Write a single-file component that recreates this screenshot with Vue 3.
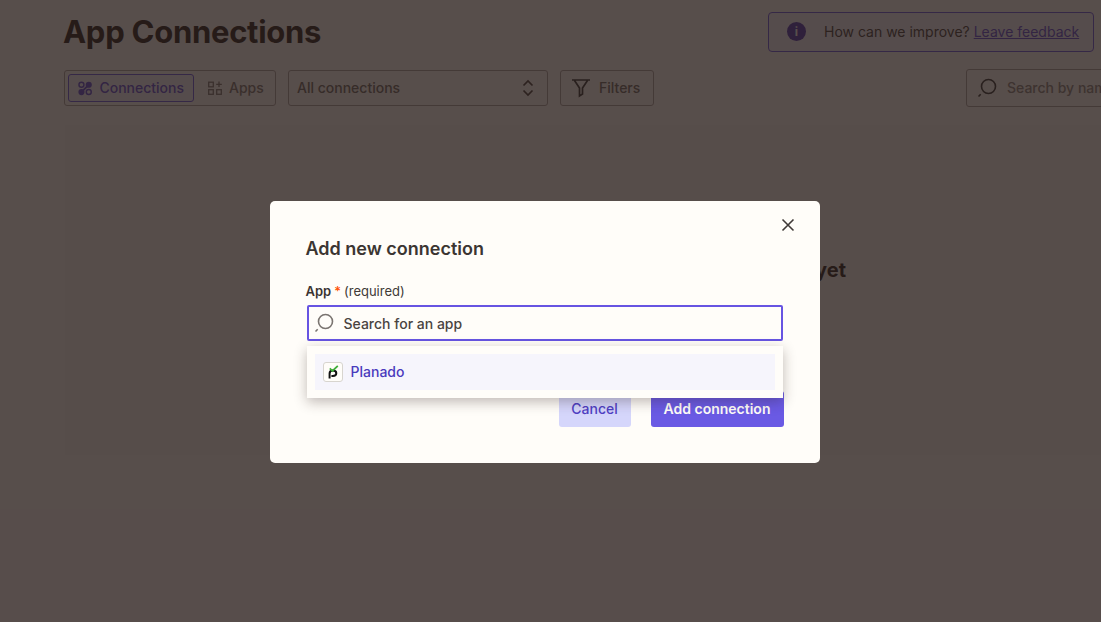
<script setup>
const tabs = [
  { id: 'connections', label: 'Connections', active: true },
  { id: 'apps', label: 'Apps', active: false }
]
</script>

<template>
  <div class="page">
    <header class="page-head">
      <h1>App Connections</h1>
      <div class="feedback">
        <span class="info-dot">i</span>
        <span class="feedback-text">How can we improve? <a href="#">Leave feedback</a></span>
      </div>
    </header>

    <div class="toolbar">
      <div class="tabs">
        <button v-for="tab in tabs" :key="tab.id" class="tab" :class="{ active: tab.active }">
          <svg v-if="tab.id === 'connections'" width="15" height="15" viewBox="0 0 15 15" fill="currentColor">
            <circle cx="3.6" cy="3.6" r="2.6" fill="none" stroke="currentColor" stroke-width="1.5" />
            <circle cx="11.2" cy="3.6" r="3.2" />
            <circle cx="3.6" cy="11.2" r="3.2" />
            <path d="M4 10.8 10.8 4" stroke="currentColor" stroke-width="2" />
            <circle cx="11.2" cy="11.2" r="2.6" fill="none" stroke="currentColor" stroke-width="1.5" />
          </svg>
          <svg v-else width="14" height="14" viewBox="0 0 14 14" fill="none" stroke="currentColor" stroke-width="1.3">
            <rect x="0.7" y="1.2" width="4.6" height="4.6" />
            <rect x="0.7" y="8.7" width="4.6" height="4.6" />
            <rect x="8.7" y="8.7" width="4.6" height="4.6" />
            <path d="M11 0.5v5.6M8.2 3.3h5.6" />
          </svg>
          {{ tab.label }}
        </button>
      </div>
      <div class="select">
        <span>All connections</span>
        <svg width="14" height="18" viewBox="0 0 14 18" fill="none" stroke="currentColor" stroke-width="1.7">
          <path d="M2.5 6.5 7 2l4.5 4.5M2.5 11.5 7 16l4.5-4.5" />
        </svg>
      </div>
      <button class="filters">
        <svg width="20" height="20" viewBox="0 0 20 20" fill="none" stroke="currentColor" stroke-width="1.7">
          <path d="M1 2h18M3.5 2.5l5 7.5v8l3-2v-6l5-7.5" />
        </svg>
        Filters
      </button>
      <div class="page-search">
        <svg class="search-icon" width="20" height="20" viewBox="0 0 20 20" fill="none" stroke="currentColor" stroke-width="1.6">
          <circle cx="11.5" cy="8.5" r="7" />
          <path d="M1.5 18.5l2.2-2.2" />
        </svg>
        <span>Search by name</span>
      </div>
    </div>

    <section class="empty">
      <h2>You don't have any connections yet</h2>
    </section>

    <div class="scrim">
      <div class="modal">
        <button class="close" aria-label="Close">
          <svg width="14" height="14" viewBox="0 0 14 14" fill="none" stroke="currentColor" stroke-width="1.6">
            <path d="M1.5 1.5l11 11M12.5 1.5l-11 11" />
          </svg>
        </button>
        <h3>Add new connection</h3>
        <label class="field-label">App<em>*</em><span>(required)</span></label>
        <div class="search-box">
          <svg class="search-icon" width="20" height="20" viewBox="0 0 20 20" fill="none" stroke="currentColor" stroke-width="1.6">
            <circle cx="11.5" cy="8.5" r="7" />
            <path d="M1.5 18.5l2.2-2.2" />
          </svg>
          <span>Search for an app</span>
        </div>
        <div class="dropdown">
          <div class="option">
            <span class="app-logo">
              <svg width="14" height="14" viewBox="0 0 14 14" fill="none">
                <path d="M3.6 13.5V8.4c0-1.8 1.4-2.9 3.3-2.9s3.4 1.1 3.4 2.7-1.5 2.7-3.4 2.7H5.4" stroke="#111" stroke-width="2" />
                <path d="M3.8 3.4l2.6 2.5 5.4-5" stroke="#3fae3a" stroke-width="1.8" />
              </svg>
            </span>
            Planado
          </div>
        </div>
        <div class="actions">
          <button class="btn-cancel">Cancel</button>
          <button class="btn-add">Add connection</button>
        </div>
      </div>
    </div>
  </div>
</template>

<style scoped>
.page { position: relative; height: 622px; overflow: hidden; background: #fffdf9; color: #2d2e2e; font-family: Inter, "Liberation Sans", sans-serif; }
.page-head { display: flex; justify-content: space-between; align-items: flex-start; padding: 12px 7px 0 63px; height: 58px; box-sizing: border-box; }
h1 { margin: 0; font-size: 31px; line-height: 40px; font-weight: 700; letter-spacing: -0.27px; color: #201714; }
.feedback { display: flex; align-items: center; width: 326px; height: 40px; box-sizing: border-box; border: 1px solid #6754e2; border-radius: 4px; background: #f6f5ff; padding: 0 0 1px 18px; font-size: 14px; white-space: nowrap; color: #3f3835; }
.info-dot { width: 19px; height: 19px; border-radius: 50%; background: #4a2fb0; color: #fffdf9; font-size: 12px; font-weight: 700; line-height: 19px; text-align: center; margin-right: 18px; flex: none; }
.feedback a { color: #5b45d6; }
.toolbar { display: flex; align-items: center; padding-left: 64px; gap: 12px; height: 36px; margin-top: 12px; white-space: nowrap; }
.tabs { display: flex; align-items: center; gap: 4px; height: 36px; width: 212px; box-sizing: border-box; border: 1px solid #a8a39e; border-radius: 3px; padding: 3px; }
.tab { display: flex; align-items: center; gap: 7px; height: 28px; padding: 0 9px 2px 9px; border: 1px solid transparent; border-radius: 3px; background: none; font: 500 14px Inter, "Liberation Sans", sans-serif; color: #7a7470; }
.tab svg { margin-top: 2px; }
.tab.active { width: 126px; border-color: #6754e2; background: #f6f5ff; color: #5b45d6; }
.select { display: flex; align-items: center; justify-content: space-between; width: 260px; height: 36px; box-sizing: border-box; padding: 0 12px 2px 8px; border: 1px solid #a8a39e; border-radius: 3px; font-size: 14px; font-weight: 500; color: #6b6560; }
.select svg { color: #3f3835; margin-top: 2px; }
.filters { display: flex; align-items: center; gap: 8px; width: 94px; height: 36px; box-sizing: border-box; padding: 0 0 2px 10px; border: 1px solid #a8a39e; border-radius: 3px; background: none; font: 500 14px Inter, "Liberation Sans", sans-serif; color: #6b6560; }
.filters svg { color: #2d2e2e; margin-top: 2px; }
.page-search { display: flex; align-items: center; gap: 10px; width: 200px; height: 38px; box-sizing: border-box; margin-left: auto; margin-right: -65px; padding: 0 0 2px 10px; border: 1px solid #a8a39e; border-radius: 3px; font-size: 14px; font-weight: 500; color: #8a847f; }
.page-search svg { margin-top: 2px; }
.empty { position: relative; margin: 19px 0 0 65px; height: 330px; background: #fbf9f4; }
.empty h2 { margin: 0; position: absolute; right: 255px; top: 132px; font-size: 20px; line-height: 26px; font-weight: 700; color: #201714; white-space: nowrap; }
.scrim { position: absolute; inset: 0; padding-right: 12px; background: rgba(40, 28, 26, 0.78); display: flex; align-items: flex-start; justify-content: center; }
.modal { position: relative; width: 550px; height: 262px; box-sizing: border-box; margin-top: 201px; padding: 36px; background: #fffdf9; border-radius: 5px; }
.close { position: absolute; top: 17px; right: 25px; width: 14px; height: 14px; padding: 0; border: none; background: none; color: #403a37; display: flex; }
h3 { margin: 0; font-size: 18px; line-height: 24px; font-weight: 600; color: #3b3532; }
.field-label { display: block; margin-top: 22px; font-size: 13px; line-height: 16px; font-weight: 600; color: #3b3532; }
.field-label em { font-style: normal; font-weight: 500; color: #ff4f00; margin: 0 3px 0 3px; }
.field-label span { font-weight: 400; color: #403a37; }
.search-box { display: flex; align-items: center; gap: 10px; width: 476px; height: 36px; box-sizing: border-box; margin: 6px 0 0 1px; padding-left: 5px; border: 2px solid #6754e2; border-radius: 2px; font-size: 14px; font-weight: 500; color: #4a4441; }
.search-icon { flex: none; color: #7a7470; }
.page-search .search-icon { color: #2d2e2e; }
.dropdown { position: absolute; top: 145px; left: 37px; z-index: 1; width: 476px; height: 52px; box-sizing: border-box; padding: 8px; background: #fffdf9; box-shadow: 0 4px 12px rgba(45, 30, 25, 0.3); }
.option { display: flex; align-items: center; gap: 8px; height: 36px; box-sizing: border-box; padding: 0 0 2px 8px; background: #f6f5fc; font-size: 14px; font-weight: 500; color: #4a3bbd; }
.app-logo { display: flex; align-items: center; justify-content: center; width: 20px; height: 20px; box-sizing: border-box; margin-top: 2px; border: 1px solid #d8d5cf; border-radius: 3px; background: #fffdf9; }
.actions { position: absolute; right: 36px; bottom: 36px; display: flex; gap: 20px; }
.actions button { height: 36px; padding: 0 0 2px; border: none; border-radius: 3px; font: 600 14px Inter, "Liberation Sans", sans-serif; }
.actions .btn-cancel { width: 72px; background: #d5d6fb; color: #4f3fc4; font-weight: 500; }
.btn-add { width: 133px; background: #6a5ae4; color: #fffdf9; }
</style>
